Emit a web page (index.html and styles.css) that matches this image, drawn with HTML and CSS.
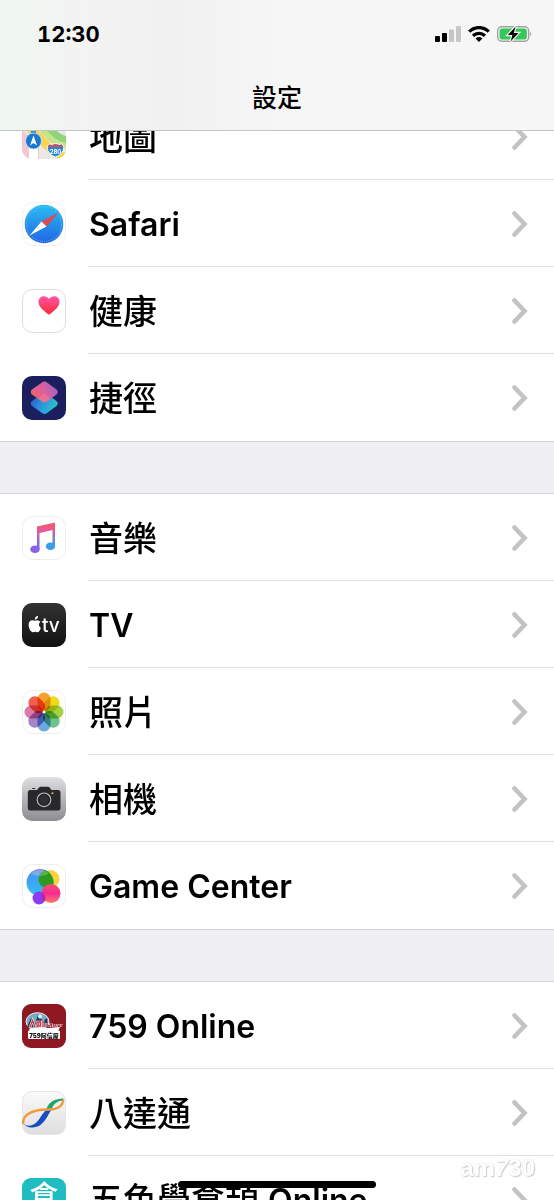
FILE: index.html
```html
<!DOCTYPE html>
<html lang="zh-Hant">
<head>
  <meta charset="UTF-8">
  <meta name="viewport" content="width=device-width, initial-scale=1.0">
  <title>設定</title>
  <link rel="stylesheet" href="styles.css">
</head>
<body>

  <!-- shared chevron -->
  <svg class="defs" aria-hidden="true">
    <symbol id="chevron" viewBox="0 0 16 26">
      <path d="M2.5 2.5 L12.5 13 L2.5 23.5" fill="none" stroke="#c3c3c5" stroke-width="4.6" stroke-linecap="round" stroke-linejoin="miter"/>
    </symbol>
  </svg>

  <header class="navbar">
    <div class="status">
      <time class="clock">12:30</time>
      <div class="indicators">
        <svg class="signal" viewBox="0 0 26 16" aria-label="Signal">
          <rect x="0" y="10" width="5" height="6" rx="1"/>
          <rect x="7" y="7" width="5" height="9" rx="1"/>
          <rect x="14" y="3.5" width="5" height="12.5" rx="1" fill="#c6c6c6"/>
          <rect x="21" y="0" width="5" height="16" rx="1" fill="#c6c6c6"/>
        </svg>
        <svg class="wifi" viewBox="0 0 22 16" aria-label="Wi-Fi">
          <g fill="none" stroke="#000" stroke-width="3.2">
            <path d="M1.2 5.6 C6.8 0.2 15.2 0.2 20.8 5.6"/>
            <path d="M5 9.7 C8.5 6.5 13.5 6.5 17 9.7"/>
          </g>
          <path d="M7.600 12.400 Q11 9.600 14.400 12.400 L11 15.900 Z"/>
        </svg>
        <svg class="battery" viewBox="0 0 36 16" aria-label="Battery">
          <rect x="0.7" y="0.7" width="31" height="14.6" rx="4" fill="#f4f4f4" stroke="#a3a3a3" stroke-width="1.4"/>
          <rect x="2.6" y="2.6" width="27.2" height="10.8" rx="2.2" fill="#34c759"/>
          <path d="M33.2 5.5 Q35.4 8 33.2 10.5 Z" fill="#a3a3a3"/>
          <path d="M18.500 0.800 L10.800 9 H15.400 L13.800 15.200 L21.500 7 H16.800 Z" fill="#000" stroke="#f4f4f4" stroke-width="2.4" paint-order="stroke"/>
        </svg>
      </div>
    </div>
    <h1 class="title">設定</h1>
  </header>

  <main class="settings">
    <ul class="group">
      <li><a class="row" href="#maps">
        <svg class="icon" viewBox="0 0 44 44" aria-hidden="true">
          <defs><clipPath id="mapClip"><rect width="44" height="44" rx="10"/></clipPath></defs>
          <g clip-path="url(#mapClip)">
            <rect width="44" height="44" fill="#ebe9e6"/>
            <path d="M0 15 L17 32 V44 H0 Z" fill="#f6c6d0"/>
            <path d="M7 24 H16 V44 H7 Z" fill="#fff"/>
            <path d="M15 12 C24 14 27 24 44 29 V21 C34 18 32 12 28 5 H15 Z" fill="#8dd47b"/>
            <path d="M20 15 C26 20 29 28 44 31" fill="none" stroke="#c9e488" stroke-width="6"/>
            <path d="M0 8 C18 18 24 37 44 42" fill="none" stroke="#fbd44c" stroke-width="8"/>
            <path d="M9 0 H14 V25 H9 Z" fill="#2f87d9"/>
            <circle cx="11.500" cy="26" r="8" fill="#1878d2" stroke="#d5eafa" stroke-width="0.8"/>
            <path d="M11.500 20.500 L15 30.500 L11.500 28 L8 30.500 Z" fill="#fff"/>
            <path d="M27 29 Q30 30 33.500 28.500 Q37 30 40 29 L42 32 Q41 40 33.500 42 Q26 40 25 32 Z" fill="#2786cf" stroke="#fff" stroke-width="1"/>
            <path d="M27 29.500 Q30 30.500 33.500 29 Q37 30.500 40 29.500 L41 32 H26 Z" fill="#d64c57"/>
            <text class="road" x="33.500" y="38.500">280</text>
          </g>
        </svg>
        <span class="label">地圖</span>
        <svg class="chevron" aria-hidden="true"><use href="#chevron"/></svg>
      </a></li>
      <li><a class="row" href="#safari">
        <svg class="icon" viewBox="0 0 44 44" aria-hidden="true">
          <defs><linearGradient id="safariBlue" x2="0" y2="1"><stop stop-color="#2bbdf2"/><stop offset="1" stop-color="#2165e3"/></linearGradient></defs>
          <rect x="0.5" y="0.5" width="43" height="43" rx="10" fill="#fff" stroke="#f0f0f0"/>
          <circle cx="22" cy="22" r="19.3" fill="url(#safariBlue)"/>
          <circle cx="22" cy="22" r="17.500" fill="none" stroke="#8fd0f8" stroke-width="1.2" stroke-dasharray="0.5 1.7"/>
          <path d="M36.500 10.500 L19.500 19.500 L24.500 24.500 Z" fill="#e6484d"/>
          <path d="M7.500 33.500 L19.500 19.500 L24.500 24.500 Z" fill="#fff"/>
        </svg>
        <span class="label latin">Safari</span>
        <svg class="chevron" aria-hidden="true"><use href="#chevron"/></svg>
      </a></li>
      <li><a class="row" href="#health">
        <svg class="icon" viewBox="0 0 44 44" aria-hidden="true">
          <defs><linearGradient id="heart" x2="0" y2="1"><stop stop-color="#ff54a5"/><stop offset="1" stop-color="#fb2c35"/></linearGradient></defs>
          <rect x="0.5" y="0.5" width="43" height="43" rx="10" fill="#fff" stroke="#dedede"/>
          <path d="M27 25.800 C21 21.500 16.500 17.500 16.500 12.800 C16.500 6.500 24 5.500 27 10 C30 5.500 37.500 6.500 37.500 12.800 C37.500 17.500 33 21.500 27 25.800 Z" fill="url(#heart)"/>
        </svg>
        <span class="label">健康</span>
        <svg class="chevron" aria-hidden="true"><use href="#chevron"/></svg>
      </a></li>
      <li><a class="row" href="#shortcuts">
        <svg class="icon" viewBox="0 0 44 44" aria-hidden="true">
          <defs>
            <linearGradient id="cutTop" x1="0" y1="0.7" x2="1" y2="0.3"><stop stop-color="#f0636b"/><stop offset="0.55" stop-color="#d9609f"/><stop offset="1" stop-color="#9b60c8"/></linearGradient>
            <linearGradient id="cutBottom" x1="0" y1="0.3" x2="1" y2="0.7"><stop stop-color="#2a5fc4"/><stop offset="0.5" stop-color="#2b9be3"/><stop offset="1" stop-color="#28c8c0"/></linearGradient>
          </defs>
          <rect width="44" height="44" rx="10" fill="#1b1f5e"/>
          <path d="M20 18 Q22.500 16 25 18 L34.500 25 Q37 27.500 34.500 30 L25 37 Q22.500 39 20 37 L10 30 Q7.500 27.500 10 25 Z" fill="url(#cutBottom)"/>
          <path d="M20 6.500 Q22.500 4.500 25 6.500 L34.500 13.500 Q37 16 34.500 18.500 L25 25.500 Q22.500 27.500 20 25.500 L10 18.500 Q7.500 16 10 13.500 Z" fill="url(#cutTop)"/>
          <path d="M22.500 17 L28.500 22.800 L25 25.500 Q22.500 27.500 20 25.500 L16 22.800 Z" fill="#f28a9a" opacity="0.4"/>
        </svg>
        <span class="label">捷徑</span>
        <svg class="chevron" aria-hidden="true"><use href="#chevron"/></svg>
      </a></li>
    </ul>

    <ul class="group">
      <li><a class="row" href="#music">
        <svg class="icon" viewBox="0 0 44 44" aria-hidden="true">
          <defs>
            <linearGradient id="note" gradientUnits="userSpaceOnUse" x1="24" y1="7" x2="20" y2="38"><stop stop-color="#f7566f"/><stop offset="0.35" stop-color="#dc5ba3"/><stop offset="0.65" stop-color="#7e6ce8"/><stop offset="1" stop-color="#8a5be8"/></linearGradient>
            <linearGradient id="noteBlue" gradientUnits="userSpaceOnUse" x1="30" y1="14" x2="30" y2="33"><stop stop-color="#e95a84"/><stop offset="0.6" stop-color="#5a8ae8"/><stop offset="1" stop-color="#35a5ef"/></linearGradient>
          </defs>
          <rect x="0.5" y="0.5" width="43" height="43" rx="10" fill="#fff" stroke="#eee"/>
          <path d="M15 10.500 L33 6.500 V13.500 L17.500 17 V33 H15 Z" fill="url(#note)"/>
          <ellipse cx="13" cy="33.300" rx="4.7" ry="3.8" fill="#8a62ea"/>
          <path d="M30.500 10 L33 8 V30 H30.500 Z" fill="url(#noteBlue)"/>
          <ellipse cx="28.500" cy="30.200" rx="4.6" ry="3.8" fill="#399de9"/>
        </svg>
        <span class="label">音樂</span>
        <svg class="chevron" aria-hidden="true"><use href="#chevron"/></svg>
      </a></li>
      <li><a class="row" href="#tv">
        <svg class="icon" viewBox="0 0 44 44" aria-hidden="true">
          <defs><linearGradient id="tvBlack" x2="0" y2="1"><stop stop-color="#333"/><stop offset="1" stop-color="#111"/></linearGradient></defs>
          <rect width="44" height="44" rx="10" fill="url(#tvBlack)"/>
          <path d="M13.200 17.800 Q15.800 16.200 18.500 18.700 Q15 21.500 18.800 25 Q17.200 29.500 15.200 29.300 Q13.200 28.300 11.200 29.300 Q9 29.500 7.300 25.500 Q5.300 19.500 8.800 17.600 Q10.500 16.700 13.200 17.800 Z" fill="#fff"/>
          <path d="M12.800 16.700 Q12.600 13.600 16 12.700 Q16.300 15.800 12.800 16.700 Z" fill="#fff"/>
          <text class="tv" x="20" y="29">tv</text>
        </svg>
        <span class="label latin">TV</span>
        <svg class="chevron" aria-hidden="true"><use href="#chevron"/></svg>
      </a></li>
      <li><a class="row" href="#photos">
        <svg class="icon" viewBox="0 0 44 44" aria-hidden="true">
          <rect x="0.5" y="0.5" width="43" height="43" rx="10" fill="#fff" stroke="#eee"/>
          <g class="petals">
            <rect x="15.500" y="2.500" width="13" height="18.500" rx="6.500" fill="#f7a02d"/>
            <rect x="15.500" y="2.500" width="13" height="18.500" rx="6.500" fill="#eddc1d" transform="rotate(45 22 22)"/>
            <rect x="15.500" y="2.500" width="13" height="18.500" rx="6.500" fill="#a5d145" transform="rotate(90 22 22)"/>
            <rect x="15.500" y="2.500" width="13" height="18.500" rx="6.500" fill="#6fc18e" transform="rotate(135 22 22)"/>
            <rect x="15.500" y="2.500" width="13" height="18.500" rx="6.500" fill="#6ba9e0" transform="rotate(180 22 22)"/>
            <rect x="15.500" y="2.500" width="13" height="18.500" rx="6.500" fill="#a584c9" transform="rotate(225 22 22)"/>
            <rect x="15.500" y="2.500" width="13" height="18.500" rx="6.500" fill="#dd7ba8" transform="rotate(270 22 22)"/>
            <rect x="15.500" y="2.500" width="13" height="18.500" rx="6.500" fill="#f0604d" transform="rotate(315 22 22)"/>
          </g>
          <circle cx="22" cy="22" r="1.3" fill="#fff"/>
        </svg>
        <span class="label">照片</span>
        <svg class="chevron" aria-hidden="true"><use href="#chevron"/></svg>
      </a></li>
      <li><a class="row" href="#camera">
        <svg class="icon" viewBox="0 0 44 44" aria-hidden="true">
          <defs><linearGradient id="cameraGray" x2="0" y2="1"><stop stop-color="#dedfe1"/><stop offset="1" stop-color="#8d8c91"/></linearGradient></defs>
          <rect width="44" height="44" rx="10" fill="url(#cameraGray)"/>
          <path d="M10 12 Q10 11 11 11 H12.500 Q13.500 11 13.500 12 Z" fill="#29292b"/>
          <path d="M8 13 H15 L17 10.500 Q17.500 9.800 18.500 9.800 H26 Q27 9.800 27.500 10.500 L29.500 13 H36 Q38.500 13 38.500 15.500 V31 Q38.500 33.500 36 33.500 H8 Q5.800 33.500 5.800 31 V15.500 Q5.800 13 8 13 Z" fill="#29292b"/>
          <circle cx="22" cy="22.800" r="6.8" fill="#252527" stroke="#bebec1" stroke-width="1.1"/>
          <circle cx="22" cy="22.800" r="4.5" fill="#303033"/>
          <circle cx="30.500" cy="16.300" r="1" fill="#f2c53c"/>
        </svg>
        <span class="label">相機</span>
        <svg class="chevron" aria-hidden="true"><use href="#chevron"/></svg>
      </a></li>
      <li><a class="row" href="#game-center">
        <svg class="icon" viewBox="0 0 44 44" aria-hidden="true">
          <defs>
            <linearGradient id="gcBlue" x2="0" y2="1"><stop stop-color="#7385e8"/><stop offset="0.3" stop-color="#3f9ef0"/><stop offset="1" stop-color="#39bdf7"/></linearGradient>
            <linearGradient id="gcPink" x2="0" y2="1"><stop stop-color="#f5506e"/><stop offset="0.5" stop-color="#f72c92"/><stop offset="1" stop-color="#fb7c65"/></linearGradient>
            <clipPath id="gcClip"><circle cx="18" cy="18.500" r="13.5"/></clipPath>
          </defs>
          <rect x="0.5" y="0.5" width="43" height="43" rx="10" fill="#fff" stroke="#eee"/>
          <circle cx="28.500" cy="15" r="9" fill="#f6d33b"/>
          <circle cx="18" cy="18.500" r="13.5" fill="url(#gcBlue)"/>
          <circle cx="26" cy="15" r="9.5" fill="#2f9a20" clip-path="url(#gcClip)"/>
          <ellipse cx="18" cy="9" rx="8" ry="3" fill="#fff" opacity="0.22"/>
          <circle cx="29" cy="29.500" r="9.5" fill="url(#gcPink)"/>
          <circle cx="17" cy="34" r="6.5" fill="#8b3cf0"/>
          <path d="M20 28.600 A6.500 6.500 0 0 1 22.300 37.700 A9.500 9.500 0 0 1 20 28.600 Z" fill="#c21f9a"/>
        </svg>
        <span class="label latin">Game Center</span>
        <svg class="chevron" aria-hidden="true"><use href="#chevron"/></svg>
      </a></li>
    </ul>

    <ul class="group">
      <li><a class="row" href="#759-online">
        <svg class="icon" viewBox="0 0 44 44" aria-hidden="true">
          <rect width="44" height="44" rx="9" fill="#8e1822"/>
          <ellipse cx="15.500" cy="17.500" rx="11.5" ry="8.8" fill="#79aac5" stroke="#e6f0f3" stroke-width="1"/>
          <path d="M5 23 L9 14 L13 19 L16 11 L21 17 L25 14 L26 23 Z" fill="#263a57"/>
          <path d="M8 23 L10.500 16.500 L13 23 M15 24 V18 H18.500 V22 H15 M21 23 V16 M24 23 V19" fill="none" stroke="#eee" stroke-width="2.4"/>
          <path d="M8 23 L10.500 16.500 L13 23 M15 24 V18 H18.500 V22 H15 M21 23 V16 M24 23 V19" fill="none" stroke="#cf3345" stroke-width="1.3"/>
          <circle cx="18" cy="12.500" r="2" fill="#e7f2f6"/>
          <path d="M7 25 Q18 22 26 24 L38 23 Q37 25 36 27 H8 Z" fill="#fff"/>
          <text class="store" x="26" y="23">Store</text>
          <rect x="6" y="26.500" width="32" height="8.5" rx="1" fill="#fff"/>
          <text class="brand" x="22" y="33.500">759阿信屋</text>
        </svg>
        <span class="label latin">759 Online</span>
        <svg class="chevron" aria-hidden="true"><use href="#chevron"/></svg>
      </a></li>
      <li><a class="row" href="#octopus">
        <svg class="icon" viewBox="0 0 44 44" aria-hidden="true">
          <defs><linearGradient id="octGray" x2="0" y2="1"><stop stop-color="#fafafa"/><stop offset="1" stop-color="#dedede"/></linearGradient></defs>
          <rect x="0.5" y="0.5" width="43" height="43" rx="9" fill="url(#octGray)" stroke="#e6e6e6"/>
          <path d="M24 19.500 C26 11 33 7.500 41.500 7.500 L41 9.500 C35 10 31 13 29.500 19 Z" fill="#22a568"/>
          <path d="M1 32 C3 36 12 39 19 33.500 C25 28.500 26 23 29.500 19 L23.500 19.500 C19 24 16 33 9 34.500 C5 35 2 34 1 32 Z" fill="#164ec2"/>
          <path d="M1.200 33 C0 23 12 18.500 25 18.500 C34 19 41 16 41.200 8.500" fill="none" stroke="#f39a36" stroke-width="2.4"/>
        </svg>
        <span class="label">八達通</span>
        <svg class="chevron" aria-hidden="true"><use href="#chevron"/></svg>
      </a></li>
      <li><a class="row" href="#cangjie">
        <svg class="icon" viewBox="0 0 44 44" aria-hidden="true">
          <rect width="44" height="44" rx="9" fill="#1fbcc1"/>
          <text class="cang" x="22" y="29">倉</text>
        </svg>
        <span class="label">五色學倉頡 <span class="latin">Online</span></span>
        <svg class="chevron" aria-hidden="true"><use href="#chevron"/></svg>
      </a></li>
    </ul>
  </main>

  <div class="watermark">am<i>7</i>30</div>
  <div class="home-indicator"></div>

</body>
</html>
```
FILE: styles.css
```css
* {
  box-sizing: border-box;
}

body {
  height: 100vh;
  margin: 0;
  overflow: hidden;
  background: #efeff4;
  color: #000;
  font-family: Inter, "Noto Sans CJK TC", sans-serif;
}

.defs {
  position: absolute;
  width: 0;
  height: 0;
}

/* status bar + title */
.navbar {
  position: fixed;
  top: 0;
  left: 0;
  right: 0;
  z-index: 2;
  height: 131px;
  border-bottom: 1px solid #c4c4c6;
  background: linear-gradient(90deg, #f0f7f2, #f2f3f2 15%, #f1f1f1 32%, #f6f6f6 50%, #f6f6f6);
}

.status {
  display: flex;
  align-items: center;
  justify-content: space-between;
  height: 68px;
  padding: 0 21px 0 37px;
}

.clock {
  font-size: 22px;
  font-weight: 700;
  font-variant-numeric: tabular-nums;
}

.indicators {
  display: flex;
  gap: 7px;
}

.signal {
  width: 26px;
  height: 16px;
}

.wifi {
  width: 22px;
  height: 16px;
}

.battery {
  width: 36px;
  height: 16px;
}

.title {
  margin: 0;
  font-size: 25px;
  font-weight: 500;
  line-height: 60px;
  text-align: center;
}

/* list */
.settings {
  padding-top: 93px;
}

.group {
  margin: 0 0 51px;
  padding: 0;
  border-top: 1px solid #d3d3d6;
  border-bottom: 1px solid #d3d3d6;
  background: #fff;
  list-style: none;
}

.group:first-child {
  border-top: 0;
}

.group:last-child {
  margin-bottom: 0;
}

.row {
  display: grid;
  grid-template-columns: 44px 1fr 16px;
  align-items: center;
  column-gap: 23px;
  height: 87px;
  padding: 0 26px 0 22px;
  background: linear-gradient(#e0e0e2, #e0e0e2) 88px 100% / 100% 1px no-repeat;
  color: inherit;
  text-decoration: none;
}

.group li:last-child .row {
  background: none;
}

.icon {
  width: 44px;
  height: 44px;
}

.label {
  padding-top: 2px;
  font-size: 34px;
  font-weight: 500;
  line-height: 44px;
  white-space: nowrap;
}

.latin {
  font-size: 32px;
  font-weight: 600;
}

.chevron {
  width: 16px;
  height: 26px;
}

/* lettering inside the app icons */
.road {
  fill: #fff;
  font: 700 6px Inter, sans-serif;
  text-anchor: middle;
}

.tv {
  fill: #fff;
  font: 500 19px Inter, sans-serif;
}

.store {
  fill: #fff;
  font: italic 7px "Liberation Serif", serif;
}

.brand {
  fill: #111;
  font: 900 6px Inter, "Noto Sans CJK TC", sans-serif;
  text-anchor: middle;
}

.cang {
  fill: #fff;
  font: 500 29px "Noto Sans CJK TC", sans-serif;
  text-anchor: middle;
}

.petals {
  isolation: isolate;
}

.petals rect {
  mix-blend-mode: multiply;
}

/* overlays */
.watermark {
  position: fixed;
  right: 19px;
  bottom: 15px;
  z-index: 3;
  color: #fff;
  font: 700 24px/34px "Liberation Sans", sans-serif;
  text-shadow: 1px 1px 1px #ccc, 0 0 1px #ccc;
}

.home-indicator {
  position: fixed;
  bottom: 12px;
  left: 50%;
  z-index: 3;
  width: 198px;
  height: 7px;
  border-radius: 4px;
  background: #000;
  transform: translateX(-50%);
}
```
